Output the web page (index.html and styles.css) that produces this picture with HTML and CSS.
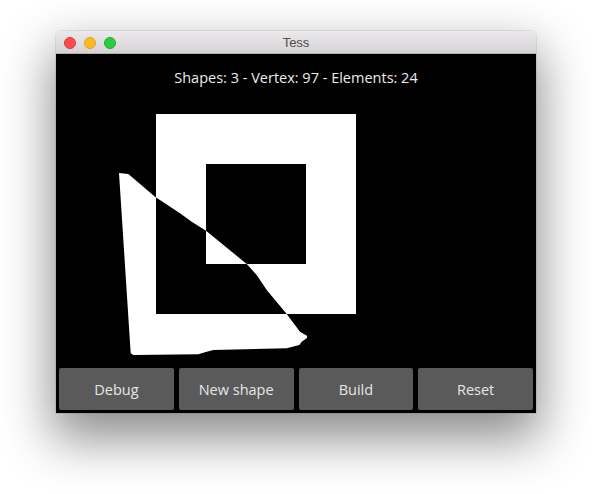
FILE: index.html
```html
<!DOCTYPE html>
<html>
<head>
<meta charset="utf-8">
<link rel="stylesheet" href="styles.css">
</head>
<body>
<div class="window">
  <div class="titlebar">
    <div class="lights">
      <span class="light red"></span>
      <span class="light yellow"></span>
      <span class="light green"></span>
    </div>
    <div class="title">Tess</div>
  </div>
  <div class="content">
    <div class="stats">Shapes: 3 - Vertex: 97 - Elements: 24</div>
    <svg class="canvas" width="480" height="279" viewBox="0 0 480 279">
      <path fill="#fff" fill-rule="evenodd" d="M100 28 H300 V228 H100 Z M150 78 H250 V178 H150 Z M63 87 L72.3 88 L77.3 92.3 L99 110.7 L124 127.3 L135.7 135.7 L150 144.7 L190.7 178 L200.7 189 L210.7 204 L230.7 228 L244 245.7 L251.3 250 L250.7 252.3 L245.7 255.7 L243.3 259 L230.7 262.3 L157.3 264 L150.7 265.7 L142.3 268.3 L77.3 269 L74.7 267.3 Z"/>
    </svg>
    <div class="buttons">
      <div class="btn">Debug</div>
      <div class="btn">New shape</div>
      <div class="btn">Build</div>
      <div class="btn">Reset</div>
    </div>
  </div>
</div>
</body>
</html>
```
FILE: styles.css
```css
html, body {
  margin: 0;
  padding: 0;
  background: #fff;
}
body {
  padding: 31px 0 0 56px;
  min-height: 494px;
  box-sizing: border-box;
}
.window {
  width: 480px;
  border-radius: 5px 5px 0 0;
  box-shadow: 0 22px 50px 4px rgba(0,0,0,0.45), 0 0 0 1px rgba(0,0,0,0.08);
  overflow: hidden;
}
.titlebar {
  height: 23px;
  background: linear-gradient(#ebe9eb, #d5d3d5);
  border-bottom: 1px solid #b1afb1;
  box-sizing: border-box;
  display: flex;
  align-items: center;
  position: relative;
}
.lights {
  display: flex;
  gap: 8px;
  padding-left: 8px;
  padding-top: 1px;
}
.light {
  width: 12px;
  height: 12px;
  border-radius: 50%;
  box-sizing: border-box;
}
.red { background: #fc4b4d; border: 1px solid #e0393c; }
.yellow { background: #fdb924; border: 1px solid #dea022; }
.green { background: #2ccd3d; border: 1px solid #23ad30; }
.title {
  position: absolute;
  left: 0;
  right: 0;
  top: 1px;
  line-height: 22px;
  text-align: center;
  font-family: "Liberation Sans", Arial, sans-serif;
  font-size: 13px;
  color: #4d4d4d;
}
.content {
  background: #000;
  height: 359px;
  display: flex;
  flex-direction: column;
}
.stats {
  height: 32px;
  padding-top: 14px;
  box-sizing: border-box;
  text-align: center;
  font-family: "Open Sans", sans-serif;
  font-size: 14.5px;
  line-height: 20px;
  color: #ececec;
}
.canvas {
  display: block;
  height: 279px;
}
.buttons {
  display: grid;
  grid-template-columns: repeat(4, 1fr);
  gap: 5px;
  padding: 3px;
  margin-top: auto;
}
.btn {
  height: 42px;
  background: #5a5a5a;
  border-radius: 2px;
  display: flex;
  align-items: center;
  justify-content: center;
  font-family: "Open Sans", sans-serif;
  font-size: 14.5px;
  color: #e6e6e6;
}
```
